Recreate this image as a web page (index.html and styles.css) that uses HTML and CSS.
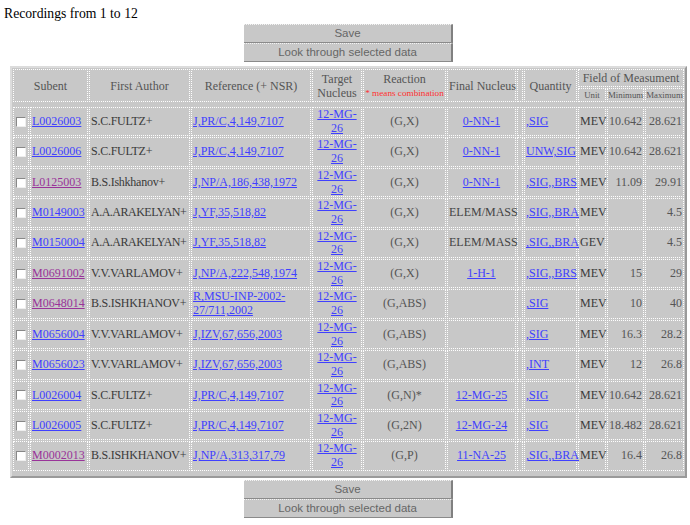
FILE: index.html
```html
<!DOCTYPE html>
<html>
<head>
<meta charset="utf-8">
<title>Recordings</title>
<link rel="stylesheet" href="styles.css">
</head>
<body>
<div class="title">Recordings from 1 to 12</div>
<div class="page">
  <div class="buttons">
    <button class="btn">Save</button>
    <button class="btn">Look through selected data</button>
  </div>
  <table class="data">
    <colgroup>
      <col class="w-chk"><col class="w-sub"><col class="w-auth"><col class="w-ref"><col class="w-tgt"><col class="w-rea"><col class="w-fin"><col class="w-gap"><col class="w-qty"><col class="w-unit"><col class="w-min"><col class="w-max">
    </colgroup>
    <tr>
      <th colspan="2" rowspan="2">Subent</th>
      <th rowspan="2">First Author</th>
      <th rowspan="2">Reference (+ NSR)</th>
      <th rowspan="2">Target<br>Nucleus</th>
      <th rowspan="2" class="rea">Reaction<br><span class="note">* means combination</span></th>
      <th rowspan="2">Final Nucleus</th>
      <th rowspan="2" class="gap"></th>
      <th rowspan="2">Quantity</th>
      <th colspan="3" class="fom">Field of Measument</th>
    </tr>
    <tr>
      <th class="sub">Unit</th><th class="sub">Minimum</th><th class="sub">Maximum</th>
    </tr>
    <tr class="spacer"><td colspan="12"></td></tr>
    <tr>
      <td class="chk"><input type="checkbox"></td>
      <td><a href="#">L0026003</a></td>
      <td class="auth">S.C.FULTZ+</td>
      <td><a href="#">J,PR/C,4,149,7107</a></td>
      <td class="ctr"><a href="#">12-MG-<br>26</a></td>
      <td class="ctr gray">(G,X)</td>
      <td class="ctr"><a href="#">0-NN-1</a></td>
      <td class="gap"></td>
      <td><a href="#">,SIG</a></td>
      <td>MEV</td><td class="num">10.642</td><td class="num">28.621</td>
    </tr>
    <tr>
      <td class="chk"><input type="checkbox"></td>
      <td><a href="#">L0026006</a></td>
      <td class="auth">S.C.FULTZ+</td>
      <td><a href="#">J,PR/C,4,149,7107</a></td>
      <td class="ctr"><a href="#">12-MG-<br>26</a></td>
      <td class="ctr gray">(G,X)</td>
      <td class="ctr"><a href="#">0-NN-1</a></td>
      <td class="gap"></td>
      <td><a href="#">UNW,SIG</a></td>
      <td>MEV</td><td class="num">10.642</td><td class="num">28.621</td>
    </tr>
    <tr>
      <td class="chk"><input type="checkbox"></td>
      <td><a href="#" class="vis">L0125003</a></td>
      <td class="auth">B.S.Ishkhanov+</td>
      <td><a href="#">J,NP/A,186,438,1972</a></td>
      <td class="ctr"><a href="#">12-MG-<br>26</a></td>
      <td class="ctr gray">(G,X)</td>
      <td class="ctr"><a href="#">0-NN-1</a></td>
      <td class="gap"></td>
      <td><a href="#">,SIG,,BRS</a></td>
      <td>MEV</td><td class="num">11.09</td><td class="num">29.91</td>
    </tr>
    <tr>
      <td class="chk"><input type="checkbox"></td>
      <td><a href="#">M0149003</a></td>
      <td class="auth narrow">A.A.ARAKELYAN+</td>
      <td><a href="#">J,YF,35,518,82</a></td>
      <td class="ctr"><a href="#">12-MG-<br>26</a></td>
      <td class="ctr gray">(G,X)</td>
      <td class="ctr dark">ELEM/MASS</td>
      <td class="gap"></td>
      <td><a href="#">,SIG,,BRA</a></td>
      <td>MEV</td><td class="num"></td><td class="num">4.5</td>
    </tr>
    <tr>
      <td class="chk"><input type="checkbox"></td>
      <td><a href="#">M0150004</a></td>
      <td class="auth narrow">A.A.ARAKELYAN+</td>
      <td><a href="#">J,YF,35,518,82</a></td>
      <td class="ctr"><a href="#">12-MG-<br>26</a></td>
      <td class="ctr gray">(G,X)</td>
      <td class="ctr dark">ELEM/MASS</td>
      <td class="gap"></td>
      <td><a href="#">,SIG,,BRA</a></td>
      <td>GEV</td><td class="num"></td><td class="num">4.5</td>
    </tr>
    <tr>
      <td class="chk"><input type="checkbox"></td>
      <td><a href="#" class="vis">M0691002</a></td>
      <td class="auth">V.V.VARLAMOV+</td>
      <td><a href="#">J,NP/A,222,548,1974</a></td>
      <td class="ctr"><a href="#">12-MG-<br>26</a></td>
      <td class="ctr gray">(G,X)</td>
      <td class="ctr"><a href="#">1-H-1</a></td>
      <td class="gap"></td>
      <td><a href="#">,SIG,,BRS</a></td>
      <td>MEV</td><td class="num">15</td><td class="num">29</td>
    </tr>
    <tr>
      <td class="chk"><input type="checkbox"></td>
      <td><a href="#" class="vis">M0648014</a></td>
      <td class="auth">B.S.ISHKHANOV+</td>
      <td><a href="#">R,MSU-INP-2002-<br>27/711,2002</a></td>
      <td class="ctr"><a href="#">12-MG-<br>26</a></td>
      <td class="ctr gray">(G,ABS)</td>
      <td class="ctr"></td>
      <td class="gap"></td>
      <td><a href="#">,SIG</a></td>
      <td>MEV</td><td class="num">10</td><td class="num">40</td>
    </tr>
    <tr>
      <td class="chk"><input type="checkbox"></td>
      <td><a href="#">M0656004</a></td>
      <td class="auth">V.V.VARLAMOV+</td>
      <td><a href="#">J,IZV,67,656,2003</a></td>
      <td class="ctr"><a href="#">12-MG-<br>26</a></td>
      <td class="ctr gray">(G,ABS)</td>
      <td class="ctr"></td>
      <td class="gap"></td>
      <td><a href="#">,SIG</a></td>
      <td>MEV</td><td class="num">16.3</td><td class="num">28.2</td>
    </tr>
    <tr>
      <td class="chk"><input type="checkbox"></td>
      <td><a href="#">M0656023</a></td>
      <td class="auth">V.V.VARLAMOV+</td>
      <td><a href="#">J,IZV,67,656,2003</a></td>
      <td class="ctr"><a href="#">12-MG-<br>26</a></td>
      <td class="ctr gray">(G,ABS)</td>
      <td class="ctr"></td>
      <td class="gap"></td>
      <td><a href="#">,INT</a></td>
      <td>MEV</td><td class="num">12</td><td class="num">26.8</td>
    </tr>
    <tr>
      <td class="chk"><input type="checkbox"></td>
      <td><a href="#">L0026004</a></td>
      <td class="auth">S.C.FULTZ+</td>
      <td><a href="#">J,PR/C,4,149,7107</a></td>
      <td class="ctr"><a href="#">12-MG-<br>26</a></td>
      <td class="ctr gray">(G,N)*</td>
      <td class="ctr"><a href="#">12-MG-25</a></td>
      <td class="gap"></td>
      <td><a href="#">,SIG</a></td>
      <td>MEV</td><td class="num">10.642</td><td class="num">28.621</td>
    </tr>
    <tr>
      <td class="chk"><input type="checkbox"></td>
      <td><a href="#">L0026005</a></td>
      <td class="auth">S.C.FULTZ+</td>
      <td><a href="#">J,PR/C,4,149,7107</a></td>
      <td class="ctr"><a href="#">12-MG-<br>26</a></td>
      <td class="ctr gray">(G,2N)</td>
      <td class="ctr"><a href="#">12-MG-24</a></td>
      <td class="gap"></td>
      <td><a href="#">,SIG</a></td>
      <td>MEV</td><td class="num">18.482</td><td class="num">28.621</td>
    </tr>
    <tr>
      <td class="chk"><input type="checkbox"></td>
      <td><a href="#" class="vis">M0002013</a></td>
      <td class="auth">B.S.ISHKHANOV+</td>
      <td><a href="#">J,NP/A,313,317,79</a></td>
      <td class="ctr"><a href="#">12-MG-<br>26</a></td>
      <td class="ctr gray">(G,P)</td>
      <td class="ctr"><a href="#">11-NA-25</a></td>
      <td class="gap"></td>
      <td><a href="#">,SIG,,BRA</a></td>
      <td>MEV</td><td class="num">16.4</td><td class="num">26.8</td>
    </tr>
    <tr class="spacer"><td colspan="12"></td></tr>
  </table>
  <div class="buttons bottom">
    <button class="btn">Save</button>
    <button class="btn">Look through selected data</button>
  </div>
</div>
</body>
</html>
```
FILE: styles.css
```css
html, body {
  margin: 0;
  padding: 0;
  background: #ffffff;
}
body {
  font-family: "Liberation Serif", "Times New Roman", serif;
  color: #333;
}
.title {
  font-size: 13.7px;
  line-height: 16px;
  margin: 6px 0 0 4px;
  color: #000;
}
.page {
  margin-left: 10px;
  width: 677px;
}
.buttons {
  display: flex;
  flex-direction: column;
  align-items: center;
  margin-top: 2px;
}
.buttons.bottom {
  margin-top: 2px;
}
.btn {
  appearance: none;
  -webkit-appearance: none;
  box-sizing: border-box;
  width: 209px;
  height: 19px;
  margin: 0;
  padding: 0;
  background: #c8c8c8;
  border: 0;
  border-top: 1px dotted #f4f4f4;
  border-right: 2px solid #808080;
  border-bottom: 1px solid #8a8a8a;
  font-family: "Liberation Sans", Arial, sans-serif;
  font-size: 11.5px;
  line-height: 17px;
  color: #666;
}
.data {
  margin-top: 4px;
  table-layout: fixed;
  width: 677px;
  border-collapse: separate;
  border-spacing: 1px;
  background: #c8c8c8;
  border: 2px solid;
  border-color: #dcdcdc #9a9a9a #9a9a9a #dcdcdc;
  font-size: 12px;
}
.w-chk { width: 16px; }
.w-sub { width: 58px; }
.w-auth { width: 101px; }
.w-ref { width: 120px; }
.w-tgt { width: 50px; }
.w-rea { width: 83px; }
.w-fin { width: 69px; }
.w-gap { width: 6px; }
.w-qty { width: 53px; }
.w-unit { width: 28px; }
.w-min { width: 37px; }
.w-max { width: 39px; }
th, td {
  box-sizing: border-box;
  border: 1px dotted #ffffff;
  padding: 0 1px;
  line-height: 13.7px;
  vertical-align: middle;
  white-space: nowrap;
  overflow: visible;
}
th {
  font-weight: normal;
  color: #555;
  text-align: center;
  padding: 1px;
  line-height: 14px;
}
th.sub {
  font-size: 8.8px;
  line-height: 12px;
  padding: 0;
}
.note {
  color: #ff3030;
  font-size: 9.2px;
  line-height: 11px;
}
th.rea {
  line-height: 13px;
}
tr.spacer td {
  height: 3px;
  padding: 0;
  border: 0;
  line-height: 0;
}
td {
  color: #3a3a3a;
}
td.auth {
  letter-spacing: -0.25px;
}
td.auth.narrow {
  letter-spacing: -0.5px;
}
td.chk {
  text-align: center;
  padding: 0;
}
td.chk input {
  appearance: none;
  -webkit-appearance: none;
  display: block;
  width: 10px;
  height: 10px;
  margin: 0 auto;
  background: #fff;
  border: 1px solid;
  border-color: #888 #eee #eee #888;
}
td.ctr {
  text-align: center;
}
td.gray {
  color: #555;
}
td.dark {
  color: #444;
}
td.num {
  text-align: right;
  color: #555;
}
td.gap, th.gap {
  padding: 0;
}
a {
  color: #4040ff;
  text-decoration: underline;
}
a.vis {
  color: #993399;
}
```
